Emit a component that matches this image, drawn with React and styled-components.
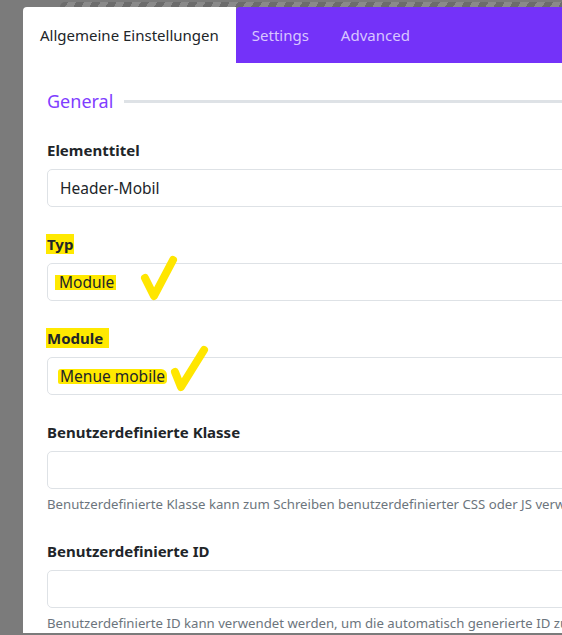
import React from 'react';
import styled, { createGlobalStyle } from 'styled-components';

const GlobalStyle = createGlobalStyle`
  html, body {
    margin: 0;
    padding: 0;
    background: #7b7b7b;
    overflow: hidden;
  }
  body {
    font-family: "Noto Sans", "Open Sans", Arial, sans-serif;
    color: #212529;
  }
`;

const fields = [
  { label: 'Elementtitel', value: 'Header-Mobil' },
  { label: 'Typ', value: 'Module', markLabel: true, markValue: true, check: 1 },
  { label: 'Module', value: 'Menue mobile', markLabel: true, markValue: true, check: 2, wavy: true },
  {
    label: 'Benutzerdefinierte Klasse',
    value: '',
    help: 'Benutzerdefinierte Klasse kann zum Schreiben benutzerdefinierter CSS oder JS verwendet werden.',
  },
  {
    label: 'Benutzerdefinierte ID',
    value: '',
    help: 'Benutzerdefinierte ID kann verwendet werden, um die automatisch generierte ID zu überschreiben.',
  },
];

const App = () => {
  return (
    <Page>
      <GlobalStyle />
      <Strip />
      <Panel>
        <TabBar>
          <ActiveTab>Allgemeine Einstellungen</ActiveTab>
          <TabRest>
            <Tab>Settings</Tab>
            <Tab>Advanced</Tab>
          </TabRest>
        </TabBar>
        <Body>
          <Legend>
            <LegendText>General</LegendText>
            <LegendLine />
          </Legend>
          {fields.map((f) => (
            <Field key={f.label}>
              <Label>{f.markLabel ? <Mark $pad={f.label === 'Module' ? 6 : 1}>{f.label}</Mark> : f.label}</Label>
              <InputWrap>
                <Input>
                  {f.markValue ? <ValueMark $wavy={f.wavy}>{f.value}</ValueMark> : f.value}
                </Input>
                {f.check === 1 && (
                  <Check $left={90} $top={-10} width="44" height="52" viewBox="0 0 44 52">
                    <path d="M8 25 L17 43 L36 7" />
                  </Check>
                )}
                {f.check === 2 && (
                  <Check $left={120} $top={-14} width="44" height="52" viewBox="0 0 44 52">
                    <path d="M8 29 L14 44 L37 7" />
                  </Check>
                )}
              </InputWrap>
              {f.help && <Help>{f.help}</Help>}
            </Field>
          ))}
        </Body>
      </Panel>
    </Page>
  );
};

// Styled Components
const Page = styled.div`
  height: 635px;
  padding-left: 23px;
  box-sizing: border-box;
  overflow: hidden;
`;

const Strip = styled.div`
  margin: 2px 0 0 37px;
  height: 5px;
  border-radius: 5px 0 0 0;
  background: repeating-linear-gradient(
    120deg,
    #6c6c6c 0 7px,
    #8a8a8a 7px 14px
  );
`;

const Panel = styled.div`
  width: 760px;
  background: #ffffff;
  border-radius: 4px 0 0 0;
`;

const TabBar = styled.div`
  display: flex;
  height: 56px;
  background: #7b7b7b;
`;

const ActiveTab = styled.div`
  display: flex;
  align-items: center;
  padding: 0 17px;
  background: #ffffff;
  border-radius: 4px 0 0 0;
  font-size: 15px;
  color: #212529;
`;

const TabRest = styled.div`
  flex: 1;
  display: flex;
  align-items: center;
  background: #7432f9;
  border-radius: 4px 0 0 0;
`;

const Tab = styled.div`
  padding: 0 16px;
  font-size: 15px;
  color: #d8c6ff;
`;

const Body = styled.div`
  padding: 27px 0 0 24px;
`;

const Legend = styled.div`
  display: flex;
  align-items: center;
  margin-bottom: 26px;
`;

const LegendText = styled.div`
  font-size: 18px;
  line-height: 23px;
  color: #7f3dff;
`;

const LegendLine = styled.div`
  flex: 1;
  height: 3px;
  margin-left: 11px;
  background: #dee2e6;
`;

const Field = styled.div`
  margin-bottom: 26px;
`;

const Label = styled.div`
  font-size: 15px;
  line-height: 22px;
  font-weight: 700;
  margin-bottom: 8px;
`;

const Mark = styled.span`
  background: #ffe900;
  padding: 0 ${(p) => p.$pad}px 0 1px;
  margin-left: -1px;
`;

const InputWrap = styled.div`
  position: relative;
`;

const Input = styled.div`
  height: 38px;
  box-sizing: border-box;
  border: 1px solid #dee2e6;
  border-radius: 5px;
  padding: 0 12px;
  display: flex;
  align-items: center;
  font-size: 15.5px;
  color: #212529;
`;

const ValueMark = styled.span`
  background: #ffe900;
  padding: 0 2px 0 ${(p) => (p.$wavy ? 2 : 4)}px;
  margin-left: ${(p) => (p.$wavy ? -2 : -5)}px;
  line-height: 15px;
  border-radius: ${(p) => (p.$wavy ? '3px 6px 4px 2px' : '0')};
`;

const Check = styled.svg`
  position: absolute;
  left: ${(p) => p.$left}px;
  top: ${(p) => p.$top}px;
  overflow: visible;

  path {
    fill: none;
    stroke: #ffe600;
    stroke-width: 8;
    stroke-linecap: round;
    stroke-linejoin: round;
  }
`;

const Help = styled.div`
  margin-top: 5px;
  font-size: 13.2px;
  line-height: 20px;
  color: #6c757d;
  white-space: nowrap;
`;

export default App;
